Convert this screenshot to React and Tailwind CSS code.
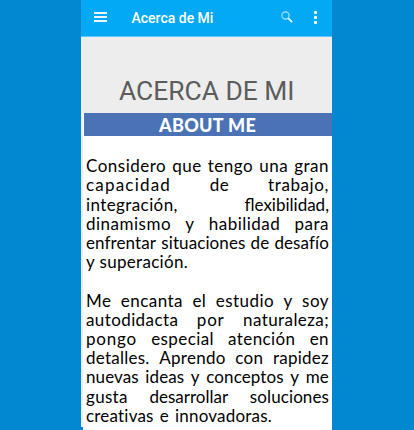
const paragraphs = [
  [
    ['Considero que tengo una gran', 'w-[243px] tracking-[0.5px]'],
    ['capacidad de trabajo,', 'w-[243px] tracking-[0.6px]'],
    ['integración, flexibilidad,', 'w-[243px] tracking-[0.4px]'],
    ['dinamismo y habilidad para', 'w-[243px] tracking-[0.5px]'],
    ['enfrentar situaciones de desafío', 'w-[243px] tracking-[0.1px]'],
    ['y superación.', 'w-[102px] tracking-[0.3px]'],
  ],
  [
    ['Me encanta el estudio y soy', 'w-[243px] tracking-[0.45px]'],
    ['autodidacta por naturaleza;', 'w-[243px] tracking-[0.4px]'],
    ['pongo especial atención en', 'w-[243px] tracking-[0.4px]'],
    ['detalles. Aprendo con rapidez', 'w-[243px] tracking-[0.25px]'],
    ['nuevas ideas y conceptos y me', 'w-[243px] tracking-[0.1px]'],
    ['gusta desarrollar soluciones', 'w-[243px] tracking-[0.3px]'],
    ['creativas e innovadoras.', 'w-[186px] tracking-[0.2px]'],
  ],
];

// Letter spacing for words that differ from the rest of their line.
const wordTracking = {
  capacidad: 'tracking-[1.2px]',
  'flexibilidad,': 'tracking-[0px]',
  pongo: 'tracking-[0.8px]',
  desarrollar: 'tracking-[0px]',
  soluciones: 'tracking-[0.1px]',
  por: 'tracking-[0.8px]',
};

function AppBar() {
  return (
    <header className="flex h-[37px] items-center border-b border-[#65c5fa] bg-[#03a9f4] pl-[13px] pr-[15px] text-white">
      <div className="mb-[2px] flex w-[13px] flex-col gap-[2px]">
        <span className="h-[2px] bg-[#e9f7ff]" />
        <span className="h-[2px] bg-[#e9f7ff]" />
        <span className="h-[2px] bg-[#e9f7ff]" />
      </div>
      <h1 className="mb-px ml-[24.5px] flex-1 whitespace-nowrap font-[Roboto,sans-serif] text-[14px] font-medium leading-[18px]">
        Acerca de Mi
      </h1>
      <svg className="mb-[2px] mr-[21px] h-[12px] w-[12px]" viewBox="0 0 12 12" fill="none">
        <circle cx="4.5" cy="4.5" r="3.6" stroke="#b0e3fc" strokeWidth="1.1" />
        <path d="M7.3 7.3 11.2 11.2" stroke="#e0f4ff" strokeWidth="1.8" />
      </svg>
      <div className="mb-[2px] flex w-[3px] flex-col gap-[2px]">
        <span className="h-[3px] rounded-[1px] bg-white" />
        <span className="h-[3px] rounded-[1px] bg-white" />
        <span className="h-[3px] rounded-[1px] bg-white" />
      </div>
    </header>
  );
}

export default function App() {
  return (
    <div className="h-[430px] w-[414px] overflow-hidden bg-[#0288d1] pl-[81px]">
      <main className="h-[430px] w-[251px] overflow-hidden">
        <AppBar />
        <div className="flex h-[76px] items-end bg-[#ededed] pl-[38px]">
          <h2 className="mb-[5px] whitespace-nowrap font-[Roboto,sans-serif] text-[26.4px] leading-[34px] text-[#5c5c5c]">
            ACERCA DE MI
          </h2>
        </div>
        <div className="flex">
          <div className="h-[314px] w-[2px] bg-[#ececec]" />
          <div className="h-[317px] flex-1 bg-white">
            <div className="ml-px h-[23px] bg-[#4a72b4] pl-[75px] font-[Lato,sans-serif] text-[18px] font-black leading-[24px] tracking-[0.3px] text-white">
              ABOUT ME
            </div>
            <div className="flex flex-col gap-[19.2px] pl-[3px] pt-[20.2px] font-[Lato,sans-serif] text-[17px] leading-[19.2px] text-black">
              {paragraphs.map((lines, i) => (
                <div key={i}>
                  {lines.map(([text, style]) => (
                    <p key={text} className={`flex justify-between whitespace-nowrap ${style}`}>
                      {text.split(' ').map((word, j) => (
                        <span key={j} className={wordTracking[word]}>{word} </span>
                      ))}
                    </p>
                  ))}
                </div>
              ))}
            </div>
          </div>
        </div>
      </main>
    </div>
  );
}
